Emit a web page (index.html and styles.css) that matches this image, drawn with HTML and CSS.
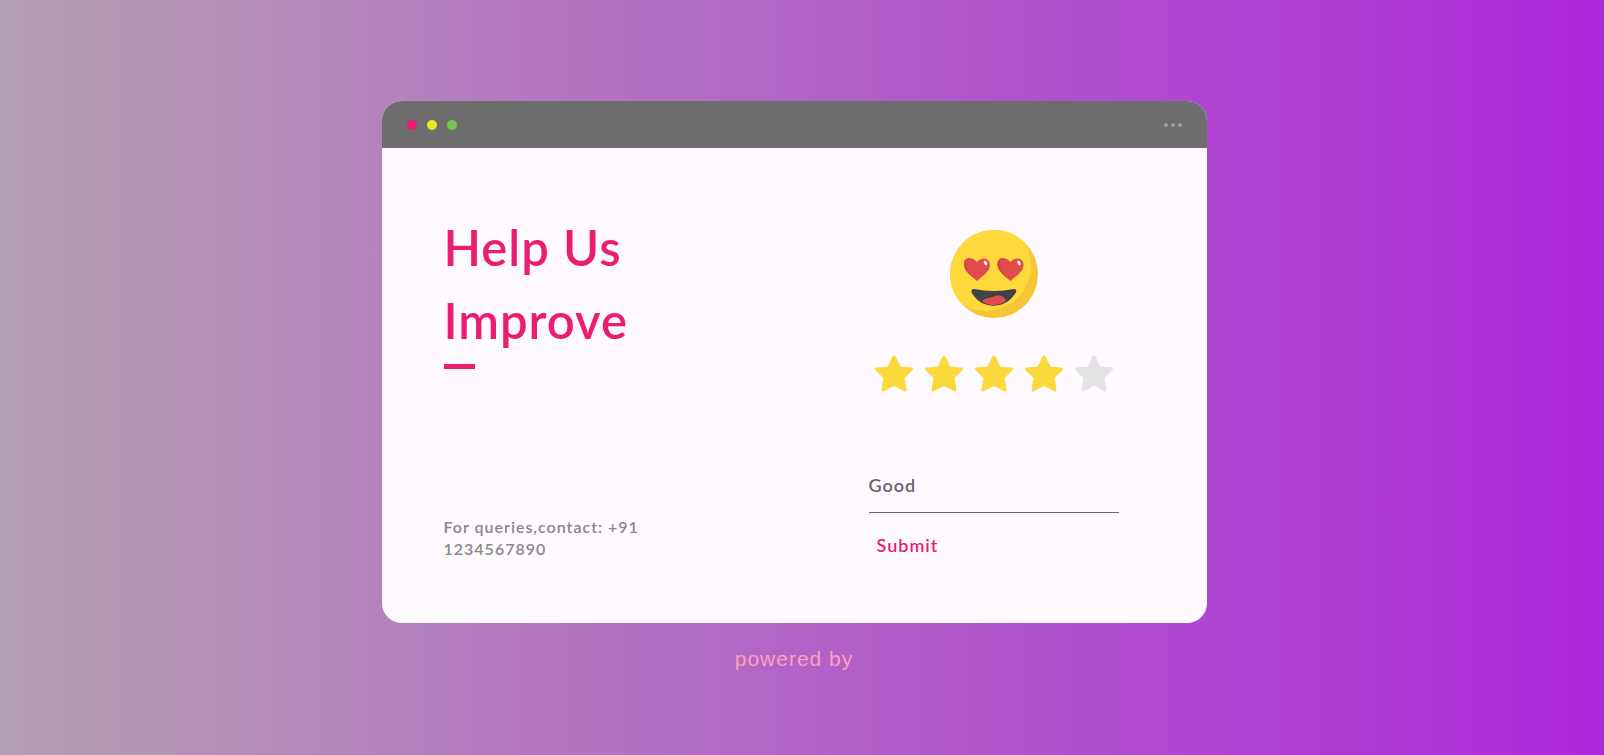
FILE: index.html
```html
<!DOCTYPE html>
<html lang="en">
<head>
<meta charset="utf-8">
<meta name="viewport" content="width=device-width, initial-scale=1">
<title>Help Us Improve</title>
<link rel="stylesheet" href="styles.css">
</head>
<body>
<svg class="defs" aria-hidden="true">
  <symbol id="star" viewBox="0 0 40 40"><path d="M20 4 25.300 15 37.500 16 29 24.500 31 37 20 31.200 9 37 11 24.500 2.500 16 14.700 15Z" fill="currentColor" stroke="currentColor" stroke-width="3" stroke-linejoin="round"/></symbol>
</svg>
<main class="page">
  <section class="card">
    <header class="bar">
      <div class="lights"><span class="light red"></span><span class="light yellow"></span><span class="light green"></span></div>
      <div class="more"><span></span><span></span><span></span></div>
    </header>
    <div class="content">
      <div class="intro">
        <h1 class="title">Help Us<br>Improve</h1>
        <p class="contact">For queries,contact: +91<br>1234567890</p>
      </div>
      <form class="feedback">
        <svg class="emoji" viewBox="0 0 88 88" role="img" aria-label="Heart eyes">
          <clipPath id="face"><circle cx="44" cy="44" r="44"/></clipPath>
          <circle cx="44" cy="44" r="44" fill="#f4c534"/>
          <circle cx="36" cy="36" r="45" fill="#ffd93b" clip-path="url(#face)"/>
          <g id="heart">
            <path d="M27 51C23 47 14 42 14 34C14 27 22 26 27 32C32 26 40 28 40 35C40 42 31 47 27 51Z" fill="#e24b4b"/>
            <path d="M27 51C23 47 14 42 14 34C14 31 16 29 18 28C13 37 20 45 27 51Z" fill="#d24242"/>
            <ellipse cx="35.500" cy="33" rx="1.600" ry="2.200" fill="#fff" transform="rotate(-30 35.500 33)"/>
          </g>
          <use href="#heart" x="33.500"/>
          <path d="M24 59Q44 63 64 59C67 59 67 62 64 65C55 79 33 79 24 66C20 61 21 59 24 59Z" fill="#3e4347"/>
          <path d="M33 72C32 68 39 68 43 67C48 64 55 66 56 71C49 76 39 76 33 72Z" fill="#e24b4b"/>
        </svg>
        <div class="stars" role="group" aria-label="Rating">
          <button type="button" class="star on" aria-label="1 star"><svg><use href="#star"/></svg></button>
          <button type="button" class="star on" aria-label="2 stars"><svg><use href="#star"/></svg></button>
          <button type="button" class="star on" aria-label="3 stars"><svg><use href="#star"/></svg></button>
          <button type="button" class="star on" aria-label="4 stars"><svg><use href="#star"/></svg></button>
          <button type="button" class="star" aria-label="5 stars"><svg><use href="#star"/></svg></button>
        </div>
        <input class="comment" type="text" value="Good" aria-label="Comment">
        <button class="submit" type="button">Submit</button>
      </form>
    </div>
  </section>
  <footer class="powered">powered by</footer>
</main>
</body>
</html>
```

FILE: styles.css
```css
* { box-sizing: border-box; }
body {
  margin: 0;
  font-family: Lato, "Open Sans", sans-serif;
  background: linear-gradient(90deg, #b69fb2, #ad28db);
}
.defs { position: absolute; width: 0; height: 0; }
.page {
  min-height: 100vh;
  padding: 101px 24px 24px 8px;
  display: flex;
  flex-direction: column;
  align-items: center;
}
.card {
  width: 100%;
  max-width: 825px;
  border-radius: 20px;
  overflow: hidden;
  background: #fefaff;
}
.bar {
  display: flex;
  justify-content: space-between;
  align-items: center;
  padding: 19px 25px 18px;
  background: #6d6d6d;
}
.lights { display: flex; gap: 10px; }
.light { width: 10px; height: 10px; border-radius: 50%; }
.red { background: #eb1d70; }
.yellow { background: #e8e925; }
.green { background: #74c54f; }
.more { display: flex; gap: 3px; }
.more span { width: 4px; height: 4px; border-radius: 50%; background: #999; }
.content {
  display: flex;
  flex-wrap: wrap;
  justify-content: space-between;
  padding: 63px 88px 63px 62px;
}
.intro { display: flex; flex-direction: column; justify-content: space-between; }
.title {
  margin: 0;
  font-size: 49px;
  line-height: 73px;
  font-weight: 600;
  letter-spacing: 1px;
  color: #eb1d70;
}
.title::after {
  content: "";
  display: block;
  width: 31px;
  height: 5px;
  margin-top: 7px;
  background: #eb1d70;
}
.contact {
  margin: 0;
  font-size: 16px;
  line-height: 22px;
  font-weight: 600;
  letter-spacing: 1px;
  color: #888;
}
.feedback { width: 250px; display: flex; flex-direction: column; }
.emoji { width: 88px; height: 88px; margin-top: 19px; align-self: center; }
.stars { display: flex; margin: 35px 0 64px; }
.star {
  flex: 1;
  display: flex;
  justify-content: center;
  padding: 0;
  border: 0;
  background: none;
  color: #e3e3e3;
  cursor: pointer;
}
.star svg { width: 40px; height: 40px; }
.on { color: #fcd93a; }
.comment {
  width: 100%;
  height: 56px;
  padding: 0;
  border: 0;
  border-bottom: 1px solid #666;
  border-radius: 0;
  background: none;
  font: 600 18px Lato, sans-serif;
  letter-spacing: 1px;
  color: #666;
}
.submit {
  align-self: flex-start;
  margin-top: 17px;
  padding: 0 8px;
  border: 0;
  background: none;
  font: 600 18px/30px Lato, sans-serif;
  letter-spacing: 1px;
  color: #eb1d70;
  cursor: pointer;
}
.powered {
  margin-top: 24px;
  font: 21px/24px "Liberation Sans", Arial, sans-serif;
  letter-spacing: 1px;
  color: #ff9fbd;
}
```
